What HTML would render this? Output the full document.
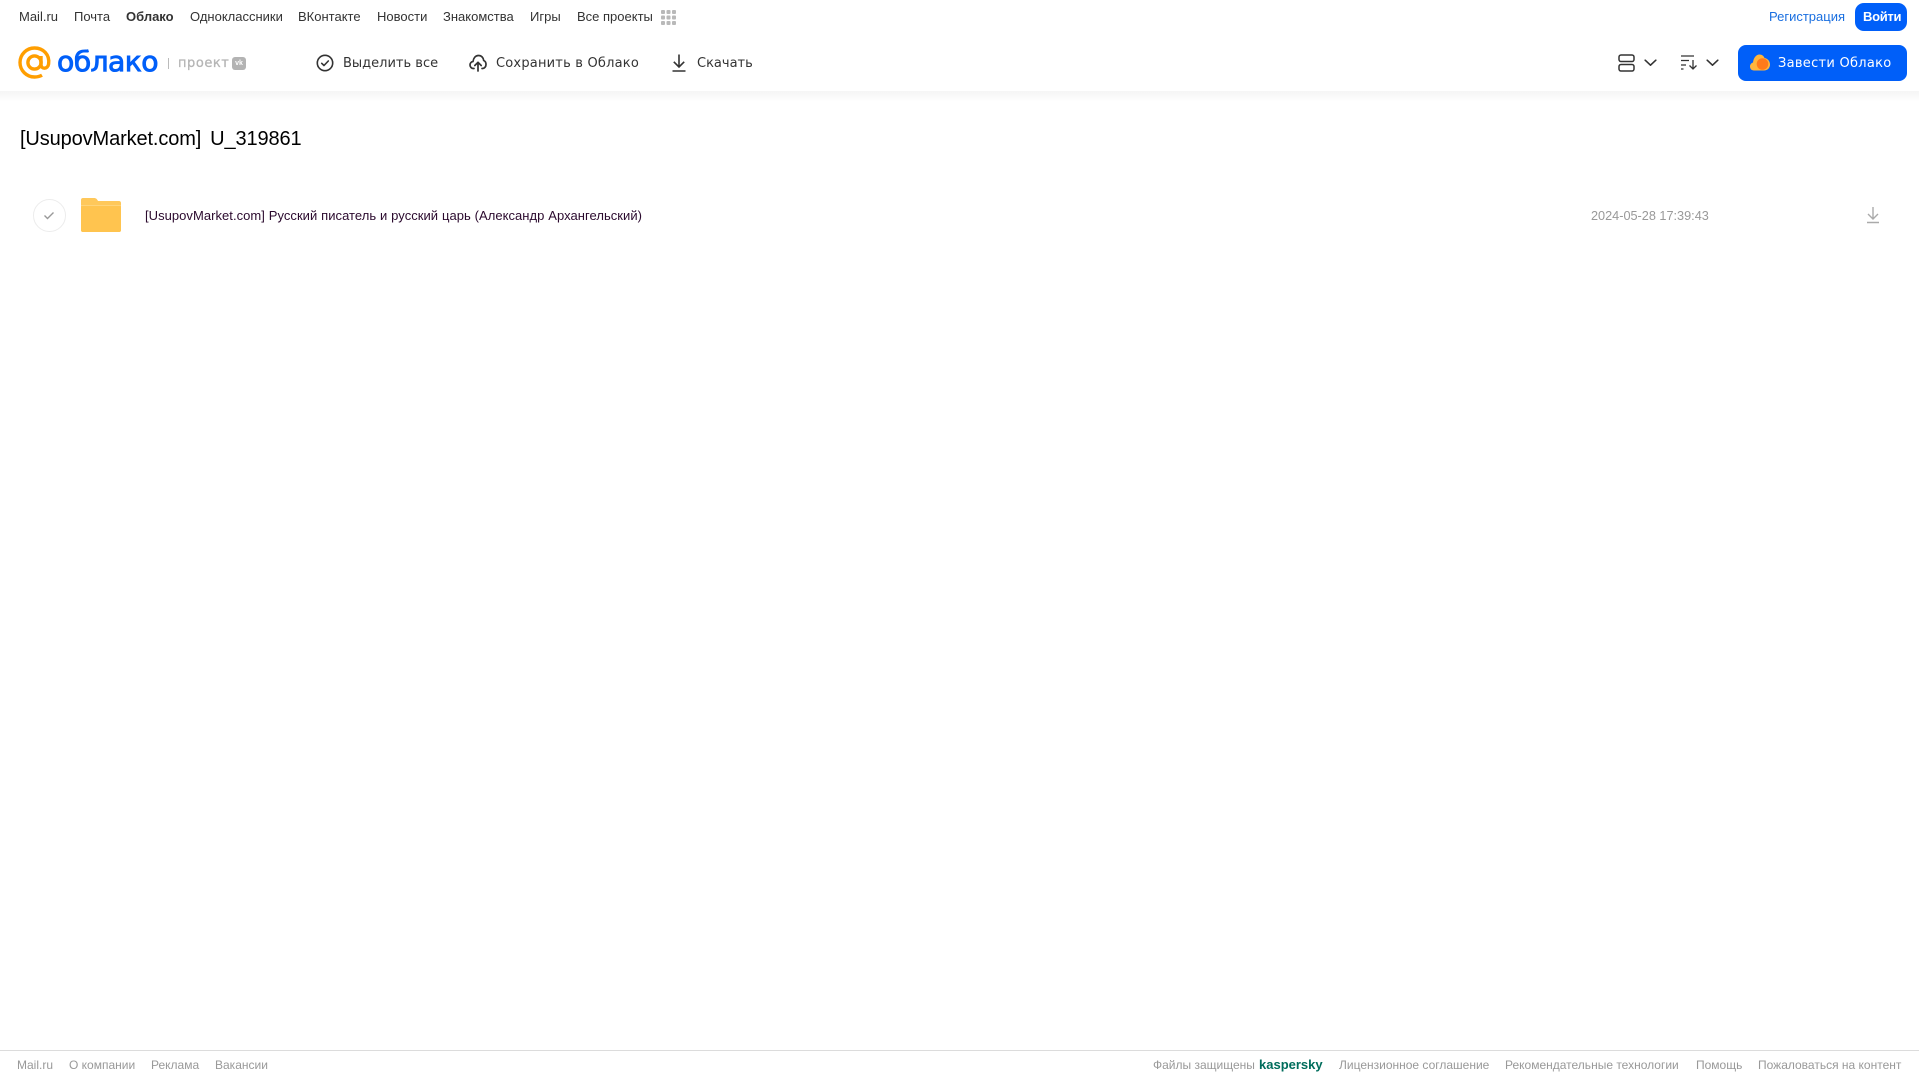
<!DOCTYPE html>
<html lang="ru">
<head>
<meta charset="utf-8">
<title>Облако</title>
<style>
html,body{margin:0;padding:0;width:1919px;height:1079px;background:#fff;overflow:hidden;font-family:"Liberation Sans",Arial,sans-serif}
.t{position:absolute;white-space:nowrap;line-height:16px}
.n{top:9px;font-size:13px;color:#333}
.a{top:56px;color:#333;font-family:"DejaVu Sans",sans-serif;font-size:13px}
.f{top:1057px;font-size:12px;color:#999}
svg{position:absolute;overflow:visible}
#shadow{position:absolute;left:0;top:91px;width:1919px;height:11px;background:linear-gradient(#f5f5f5,#fff)}
#foot{position:absolute;left:0;top:1050px;width:1919px;height:1px;background:#dcdcdc}
.btn{position:absolute;background:#005ff9;}
</style>
</head>
<body>
<div id="shadow"></div>

<span class="t n" style="left:19px">Mail.ru</span>
<span class="t n" style="left:74px">Почта</span>
<span class="t n" style="left:126px;font-weight:bold">Облако</span>
<span class="t n" style="left:190px">Одноклассники</span>
<span class="t n" style="left:298px">ВКонтакте</span>
<span class="t n" style="left:377px">Новости</span>
<span class="t n" style="left:443px">Знакомства</span>
<span class="t n" style="left:530px">Игры</span>
<span class="t n" style="left:577px">Все проекты</span>
<svg style="left:660px;top:10px" width="16" height="15" fill="#b9b9b9">
<rect x="1" y="0" width="4" height="4" rx="1"/><rect x="6.500" y="0" width="4" height="4" rx="1"/><rect x="12" y="0" width="4" height="4" rx="1"/>
<rect x="1" y="5.500" width="4" height="4" rx="1"/><rect x="6.500" y="5.500" width="4" height="4" rx="1"/><rect x="12" y="5.500" width="4" height="4" rx="1"/>
<rect x="1" y="11" width="4" height="4" rx="1"/><rect x="6.500" y="11" width="4" height="4" rx="1"/><rect x="12" y="11" width="4" height="4" rx="1"/>
</svg>

<span class="t n" style="left:1769px;color:#1a6fe0">Регистрация</span>
<div class="btn" style="left:1855px;top:3px;width:52px;height:28px;border-radius:9px"></div>
<span class="t n" style="left:1863px;color:#fff;font-weight:bold;letter-spacing:-.3px">Войти</span>

<!-- logo -->
<svg style="left:18px;top:46px" width="34" height="34" viewBox="0 0 34 34" fill="none" stroke="#ff9e00" stroke-width="3.400">
<circle cx="16.500" cy="16.500" r="6.600"/>
<path d="M23 10v8.500c0 5 6.800 5 7.600 -.5C32 8.500 25 2 16.500 2 8.500 2 2 8.500 2 16.500S8.500 31 16.500 31c3 0 5.500-.6 7.500-1.800"/>
</svg>
<span class="t" style="left:57px;top:44px;line-height:36px;font-family:'DejaVu Sans',sans-serif;font-size:28px;color:#005ff9;-webkit-text-stroke:.9px #005ff9;transform:scaleX(1.01);transform-origin:0 50%;letter-spacing:-.6px">облако</span>
<div style="position:absolute;left:168px;top:58px;width:1px;height:11px;background:#bbb"></div>
<span class="t" style="left:178px;top:56px;font-family:'DejaVu Sans',sans-serif;font-size:13px;color:#b5b5b5;-webkit-text-stroke:.3px #b5b5b5;letter-spacing:.55px">проект</span>
<div style="position:absolute;left:232px;top:57px;width:14px;height:13px;border-radius:3px;background:#b3b3b3;color:#fff;font-size:7px;font-weight:bold;line-height:13px;text-align:center">vk</div>

<!-- toolbar -->
<svg style="left:316px;top:54px" width="18" height="18" viewBox="0 0 18 18" fill="none" stroke="#333" stroke-width="1.600">
<circle cx="9" cy="9" r="7.700"/><path d="M5.700 9.300l2.300 2.200 4.300-4.500" stroke-linecap="round" stroke-linejoin="round"/>
</svg>
<span class="t a" style="left:343px">Выделить все</span>

<svg style="left:469px;top:54px" width="18" height="18" viewBox="0 0 18 18" fill="none" stroke="#333" stroke-width="1.700" stroke-linecap="round" stroke-linejoin="round">
<path d="M5 14.500H4.500C2.500 14.500 1 13 1 11c0-1.800 1.200-3.200 3-3.500C4.500 4 6.500 1.500 9.500 1.500c3 0 5 2.300 5.200 5C16 7 17 8.500 17 10.500c0 2.200-1.500 4-3.500 4H13"/>
<path d="M9 17V8.500M5.800 11.500L9 8.300l3.200 3.200"/>
</svg>
<span class="t a" style="left:496px;letter-spacing:.2px">Сохранить в Облако</span>

<svg style="left:671px;top:54px" width="16" height="18" viewBox="0 0 16 18" fill="none" stroke="#333" stroke-width="1.600">
<path d="M8 .5V13M2.800 7.800L8 13l5.200-5.200M1.500 17h13"/>
</svg>
<span class="t a" style="left:697px">Скачать</span>

<svg style="left:1618px;top:54px" width="17" height="18" viewBox="0 0 17 18" fill="none" stroke="#333" stroke-width="1.500">
<rect x="1" y="1" width="15" height="6.500" rx="2"/><rect x="1" y="10.500" width="15" height="6.500" rx="2"/>
</svg>
<svg style="left:1644px;top:59px" width="13" height="8" viewBox="0 0 13 8" fill="none" stroke="#333" stroke-width="1.600" stroke-linecap="round" stroke-linejoin="round">
<path d="M1.200 1.200l5.300 5 5.300-5"/>
</svg>
<svg style="left:1681px;top:55px" width="17" height="15" viewBox="0 0 17 15" fill="none" stroke="#333" stroke-width="1.300">
<path d="M0 1h13M0 5.500h8M0 10h5M0 14h2.500"/><path d="M12 5v9M8.500 10.500L12 14l3.500-3.500"/>
</svg>
<svg style="left:1706px;top:59px" width="13" height="8" viewBox="0 0 13 8" fill="none" stroke="#333" stroke-width="1.600" stroke-linecap="round" stroke-linejoin="round">
<path d="M1.200 1.200l5.300 5 5.300-5"/>
</svg>

<div class="btn" style="left:1738px;top:45px;width:169px;height:36px;border-radius:8px"></div>
<svg style="left:1750px;top:54px" width="20" height="17" viewBox="0 0 20 17">
<path d="M4 16.500C1.500 16.500 0 14.700 0 12.500c0-2 1.300-3.500 3-4C3.500 4 6 0.500 9.500 0.500c2.500 0 4.300 1.500 5 3.500C17.500 4.500 20 7 20 10.500c0 3.500-2.500 6-6 6z" fill="#ffb53c"/>
<circle cx="12.500" cy="10" r="5.800" fill="#ff7a1a"/>
</svg>
<span class="t a" style="left:1778px;color:#fff;letter-spacing:.28px">Завести Облако</span>

<!-- content -->
<span class="t" style="left:20px;top:127px;line-height:24px;font-size:20px;color:#000;letter-spacing:-.12px;word-spacing:3.500px">[UsupovMarket.com] U_319861</span>

<div style="position:absolute;left:33px;top:199px;width:31px;height:31px;border:1px solid #ececec;border-radius:50%"></div>
<svg style="left:43px;top:211px" width="12" height="9" viewBox="0 0 12 9" fill="none" stroke="#999" stroke-width="1.400">
<path d="M1.500 4.500l3 3 6-6"/>
</svg>
<svg style="left:81px;top:198px" width="40" height="34" viewBox="0 0 40 34">
<path d="M2 0h11c2 0 3 1 4 3h21c1.200 0 2 .8 2 2v27c0 1.200-.8 2-2 2H2c-1.200 0-2-.8-2-2V2C0 .8.800 0 2 0z" fill="#ffc85a"/>
<rect x="0" y="8" width="40" height="26" rx="2" fill="#ffc44f"/>
<rect x="0" y="7" width="40" height="1" fill="#ffd47a"/>
</svg>
<span class="t" style="left:145px;top:208px;font-size:13px;color:#2b0a2e;letter-spacing:.04px;word-spacing:.2px">[UsupovMarket.com] Русский писатель и русский царь (Александр Архангельский)</span>
<span class="t" style="left:1591px;top:208px;font-size:12.700px;color:#999">2024-05-28 17:39:43</span>
<svg style="left:1866px;top:206px" width="14" height="18" viewBox="0 0 14 18" fill="none" stroke="#aaa" stroke-width="1.400">
<path d="M7 1v12M2 8l5 5 5-5M1 16.500h12"/>
</svg>

<!-- footer -->
<div id="foot"></div>
<span class="t f" style="left:17px">Mail.ru</span>
<span class="t f" style="left:69px">О компании</span>
<span class="t f" style="left:151px">Реклама</span>
<span class="t f" style="left:215px">Вакансии</span>
<span class="t f" style="left:1153px">Файлы защищены</span>
<span class="t f" style="left:1259px;color:#006d5c;font-weight:bold;font-size:13px">kaspersky</span>
<span class="t f" style="left:1339px">Лицензионное соглашение</span>
<span class="t f" style="left:1505px">Рекомендательные технологии</span>
<span class="t f" style="left:1696px">Помощь</span>
<span class="t f" style="left:1758px">Пожаловаться на контент</span>
</body>
</html>
